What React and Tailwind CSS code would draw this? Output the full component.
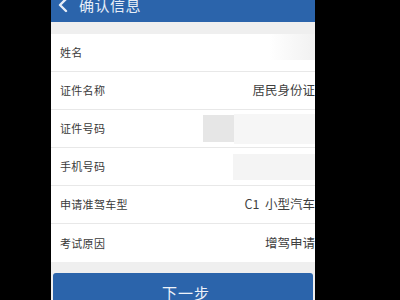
import React from "react";

const font = { fontFamily: '"Noto Sans CJK SC", "Noto Sans", sans-serif' };

function Row({ label, children, last }) {
  return (
    <div className={`relative flex h-[38px] items-center bg-white pl-[9px] ${last ? "" : "border-b border-[#e8e8e8]"}`}>
      <span className="text-[11px] tracking-[0.3px] text-[#3a3a3a]">{label}</span>
      <div className="ml-auto flex h-full items-center">{children}</div>
    </div>
  );
}

export default function App() {
  return (
    <div className="flex h-[300px] w-[400px] overflow-hidden bg-black" style={font}>
      <div className="ml-[51px] flex h-full w-[264px] flex-col bg-[#efefef]">
        <div className="h-[22px] shrink-0 overflow-hidden bg-[#2b64ab]">
          <div className="-mt-[15px] flex h-[40px] items-center pl-[6px] text-white">
            <svg width="12" height="16" viewBox="0 0 12 16" className="mr-[10px]">
              <path d="M9 2 L3 8 L9 14" fill="none" stroke="#e8eef8" strokeWidth="2.4" strokeLinecap="round" strokeLinejoin="round" />
            </svg>
            <span className="text-[15px] tracking-[0.5px] text-[#e6edf7]">确认信息</span>
          </div>
        </div>
        <div className="h-[12px] shrink-0 bg-[#efefef]" />
        <div className="flex flex-col">
          <Row label="姓名">
            <div className="h-[26px] w-[46px] self-start bg-gradient-to-r from-white to-[#f1f1f1]" />
          </Row>
          <Row label="证件名称">
            <span className="text-[12.5px] text-[#3f3f3f]">居民身份证</span>
          </Row>
          <Row label="证件号码">
            <div className="flex h-full items-center">
              <div className="h-[27px] w-[31px] bg-[#e6e6e6]" />
              <div className="h-[30px] w-[81px] bg-[#f6f6f6]" />
            </div>
          </Row>
          <Row label="手机号码">
            <div className="h-[26px] w-[82px] bg-[#f4f4f4]" />
          </Row>
          <Row label="申请准驾车型">
            <span className="text-[12.5px] text-[#3f3f3f]">C1&nbsp;&nbsp;小型汽车</span>
          </Row>
          <Row label="考试原因" last>
            <span className="text-[12.5px] text-[#3f3f3f]">增驾申请</span>
          </Row>
        </div>
        <div className="px-[2px] pt-[11px]">
          <div className="flex h-[40px] items-start justify-center rounded-[3px] bg-[#2b64ab] pl-[6px] pt-[9px] text-[15px] tracking-[1px] text-[#eef3fa]">
            下一步
          </div>
        </div>
      </div>
    </div>
  );
}
